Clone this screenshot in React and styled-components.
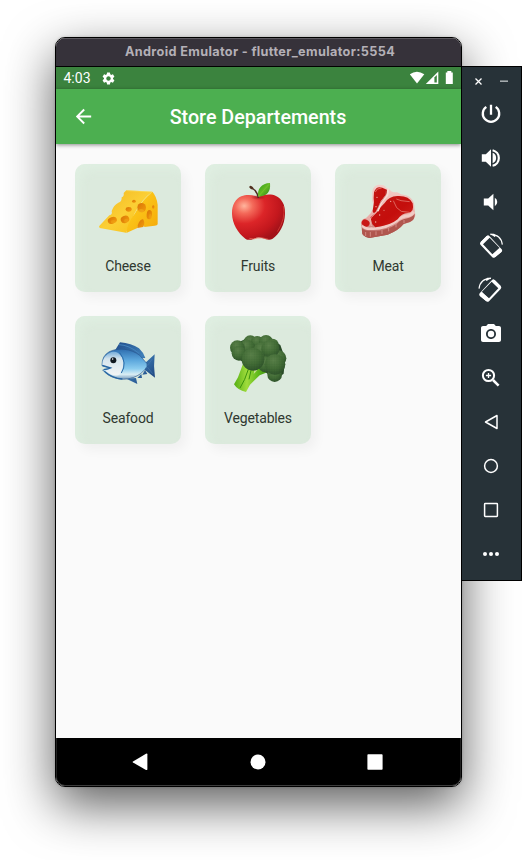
import React from "react";
import styled, { createGlobalStyle } from "styled-components";
import { MdArrowBack, MdSettings, MdPhotoCamera } from "react-icons/md";

const GlobalStyle = createGlobalStyle`
  * { box-sizing: border-box; }
  html, body { margin: 0; background: #fff; overflow: hidden; }
  svg { display: block; flex: none; }
`;

const Desktop = styled.main`
  width: 522px;
  height: 860px;
  padding: 37px 0 0 55px;
  display: flex;
  align-items: flex-start;
  background: #fff;
  overflow: hidden;
  font-family: Roboto, "Liberation Sans", sans-serif;
`;

const Device = styled.section`
  width: 407px;
  height: 750px;
  flex: none;
  display: flex;
  flex-direction: column;
  border: 1px solid #000;
  border-radius: 10px;
  overflow: hidden;
  background: #fafafa;
  box-shadow: 0 18px 50px rgba(0, 0, 0, 0.64), 0 0 3px rgba(0, 0, 0, 0.2);
`;

const TitleBar = styled.header`
  height: 29px;
  flex: none;
  display: flex;
  align-items: center;
  justify-content: center;
  padding: 0 0 1px 3px;
  background: #36323a;
  border-bottom: 1px solid #000;
  box-shadow: inset 0 1px 0 #5d5a60;
  color: #b4b0b7;
  font: 700 12.7px Inter, sans-serif;
  letter-spacing: 0.35px;
  white-space: nowrap;
`;

const StatusBar = styled.div`
  height: 22px;
  flex: none;
  display: flex;
  align-items: center;
  padding: 0 6px 0 7.5px;
  background: #3b833e;
  color: #fff;
`;

const Clock = styled.span`
  width: 37px;
  font-size: 14px;
  line-height: 22px;
`;

const StatusIcons = styled.div`
  margin-left: auto;
  display: flex;
`;

const AppBar = styled.div`
  height: 55px;
  flex: none;
  display: grid;
  grid-template-columns: 54px 1fr 54px;
  align-items: center;
  background: #4caf50;
  color: #fff;
  box-shadow: 0 1px 4px rgba(0, 0, 0, 0.45);
  z-index: 1;
`;

const BackButton = styled.div`
  display: flex;
  justify-content: center;
`;

const AppTitle = styled.h1`
  margin: 2px 0 0;
  padding-right: 1px;
  font-size: 19.7px;
  font-weight: 500;
  text-align: center;
  white-space: nowrap;
`;

const Departments = styled.div`
  flex: 1;
  display: grid;
  grid-template-columns: repeat(3, 106px);
  grid-auto-rows: 128px;
  gap: 24px;
  padding: 20px 19px;
  background: #fafafa;
`;

const Card = styled.article`
  display: flex;
  flex-direction: column;
  align-items: center;
  padding-top: 16px;
  border-radius: 10px;
  background: #dceadd;
  box-shadow: 5px 6px 12px rgba(0, 0, 0, 0.045), inset 5px 6px 10px rgba(225, 241, 228, 0.6);
`;

const CardLabel = styled.span`
  margin-top: 14px;
  font-size: 14px;
  line-height: 16px;
  letter-spacing: -0.16px;
  color: #2f3830;
`;

const NavBar = styled.nav`
  height: 48px;
  flex: none;
  display: flex;
  align-items: center;
  justify-content: space-between;
  padding: 0 78px 1px 76px;
  background: #000;
  border-radius: 0 0 9px 9px;
  box-shadow: inset 0 -1px 0 #3c3c3c, inset 1px 0 0 #222, inset -1px 0 0 #222;
`;

const Sidebar = styled.aside`
  width: 61px;
  height: 515px;
  flex: none;
  margin: 29px 0 0 -1px;
  display: flex;
  flex-direction: column;
  background: #273238;
  border: 1px solid #000;
  color: #fff;
  z-index: 1;
`;

const WindowControls = styled.div`
  height: 25px;
  padding: 3px 0 0 12px;
  display: flex;
  align-items: center;
  gap: 16px;
`;

const Tool = styled.div`
  height: 44px;
  display: flex;
  align-items: center;
  justify-content: center;
  padding-right: 1px;
`;

const Cheese = () => (
  <svg width="64" height="64" viewBox="93 75 192 192">
    <defs>
      <linearGradient id="cheeseTop" x1="0" y1="0" x2="1" y2="1">
        <stop offset="0" stopColor="#f2b51f" />
        <stop offset=".5" stopColor="#fbcf35" />
        <stop offset="1" stopColor="#f8be12" />
      </linearGradient>
      <linearGradient id="cheeseSide" x1="0" y1="0" x2="1" y2="1">
        <stop offset="0" stopColor="#ffd522" />
        <stop offset="1" stopColor="#f5a90a" />
      </linearGradient>
      <linearGradient id="cheeseHole" x1="0" y1="0" x2="1" y2="1">
        <stop offset="0" stopColor="#d97408" />
        <stop offset="1" stopColor="#f39d0b" />
      </linearGradient>
    </defs>
    <path fill="url(#cheeseTop)" d="M102 214 133 181Q143 179 140 168Q146 150 160 143Q171 142 170 127Q178 124 176 114L184 106 262 110Q230 132 208 177L183 233 104 219Z" />
    <path fill="url(#cheeseSide)" d="M262 110Q275 124 278 149V208Q277 212 269 212L238 216Q236 201 227 202Q220 204 217 219L184 234Q185 208 210 175Q232 133 262 110Z" />
    <path fill="none" stroke="#ffe05e" strokeWidth="1.5" d="M184 107 261 111M207 178Q228 138 259 114" />
    <g fill="url(#cheeseHole)">
      <ellipse cx="142" cy="196" rx="14" ry="10" transform="rotate(-20 142 196)" />
      <ellipse cx="180" cy="193" rx="13" ry="11" transform="rotate(-22 180 193)" />
      <ellipse cx="191" cy="163" rx="9" ry="7" />
      <ellipse cx="207" cy="139" rx="5.5" ry="4.5" />
      <ellipse cx="230" cy="158" rx="13" ry="14" />
      <ellipse cx="253" cy="179" rx="8" ry="14" transform="rotate(5 253 179)" />
      <ellipse cx="265" cy="156" rx="3.5" ry="5" />
      <path d="M217 219Q219 196 234 192Q241 203 235 216Z" />
    </g>
    <g fill="#f8b822">
      <ellipse cx="145" cy="200" rx="8" ry="5" opacity=".3" />
      <ellipse cx="184" cy="197" rx="7" ry="6" opacity=".3" />
      <ellipse cx="228" cy="167" rx="9" ry="5" opacity=".5" />
      <ellipse cx="256" cy="184" rx="4" ry="8" opacity=".3" />
    </g>
  </svg>
);

const Apple = () => (
  <svg width="64" height="64" viewBox="93 75 192 192">
    <defs>
      <radialGradient id="appleSkin" cx=".23" cy=".25" r=".82">
        <stop offset="0" stopColor="#ffb59d" />
        <stop offset=".2" stopColor="#f46a5a" />
        <stop offset=".48" stopColor="#dc2528" />
        <stop offset=".8" stopColor="#c3171d" />
        <stop offset="1" stopColor="#a31219" />
      </radialGradient>
      <linearGradient id="appleLeaf" x1="0" y1="0" x2="1" y2="1">
        <stop offset="0" stopColor="#2e9c1b" />
        <stop offset=".5" stopColor="#65ba23" />
        <stop offset="1" stopColor="#278417" />
      </linearGradient>
      <radialGradient id="appleDip">
        <stop offset="0" stopColor="#8e1118" stopOpacity=".7" />
        <stop offset="1" stopColor="#8e1118" stopOpacity="0" />
      </radialGradient>
    </defs>
    <path fill="url(#appleSkin)" d="M190 126C211 117 229 117 243 123C263 133 271 152 270 177C269 211 253 237 233 251Q223 258 204 250Q190 245 177 251Q160 258 151 251C128 234 112 205 111 177C110 151 121 132 139 124C154 118 173 119 190 126Z" />
    <path d="M163 250Q177 254 188 249Q199 246 220 253" fill="none" stroke="#ed7160" strokeWidth="3" opacity=".7" />
    <path d="M265 153Q273 190 247 230" fill="none" stroke="#ef5546" strokeWidth="3" opacity=".5" />
    <ellipse cx="190" cy="127" rx="23" ry="8" fill="url(#appleDip)" />
    <path d="M190 129Q187 109 171 99" fill="none" stroke="#4b2b20" strokeWidth="4" />
    <ellipse cx="169" cy="98" rx="7" ry="4" transform="rotate(38 169 98)" fill="#51301f" />
    <path fill="url(#appleLeaf)" d="M190 125C185 104 199 84 225 84Q229 123 190 125Z" />
    <path d="M192 123Q205 106 222 88" fill="none" stroke="#82c437" strokeWidth="1.5" />
  </svg>
);

const Meat = () => (
  <svg width="64" height="64" viewBox="93 75 192 192">
    <defs>
      <linearGradient id="meatEdge" x1="0" y1="0" x2="0" y2="1">
        <stop offset="0" stopColor="#f5cfca" />
        <stop offset=".65" stopColor="#e8aaa4" />
        <stop offset="1" stopColor="#a9514b" />
      </linearGradient>
      <linearGradient id="meatRed" x1="0" y1="0" x2="1" y2="1">
        <stop offset="0" stopColor="#c41814" />
        <stop offset=".55" stopColor="#c40e0c" />
        <stop offset="1" stopColor="#d12a22" />
      </linearGradient>
    </defs>
    <path fill="url(#meatEdge)" d="M142 111C143 99 150 90 161 89Q181 89 184 99L195 104Q199 113 217 112Q226 119 243 121C259 126 270 141 268 158L271 180Q269 195 255 201L236 207Q220 227 188 239L133 249Q110 243 111 230L108 203Q108 193 124 188L137 175Q150 155 142 137Z" />
    <path fill="#b0564e" d="M111 220Q121 230 142 229Q188 227 216 206Q228 193 247 190Q263 185 269 176Q271 193 255 201L236 207Q220 227 188 239L133 249Q110 243 111 230Z" />
    <path fill="none" stroke="#e3a59d" strokeWidth="2" d="M122 231v12m14-12v14m17-16v12m18-16v12m20-18v10m22-22v10m24-22v9" />
    <path fill="none" stroke="#f0cbc5" strokeWidth="8" d="M112 211Q121 223 139 221Q181 223 216 197Q229 184 251 182Q261 180 266 170" />
    <path fill="url(#meatRed)" d="M147 112Q153 92 172 98L187 105Q190 113 176 128L152 170Q144 178 143 168L147 142Q145 130 147 112Z" />
    <path fill="url(#meatRed)" d="M179 144Q191 124 217 123Q252 121 263 145Q269 172 249 174Q229 175 218 193Q196 212 151 217L142 208 136 187 152 174Q166 157 179 144Z" />
    <ellipse cx="122" cy="204" rx="12" ry="10" transform="rotate(25 122 204)" fill="#c91716" />
    <path fill="none" stroke="#f8dbd4" strokeWidth="6" strokeLinejoin="round" d="m190 101-3 19-17 20-12 28" />
    <path fill="none" stroke="#eeb4ab" strokeWidth="3" d="m158 168-20 20-3 10 4 15" />
    <path fill="none" stroke="#bd655d" strokeWidth="2" d="m184 106-2 15-17 24-10 21" />
    <path fill="none" stroke="#e88c82" strokeWidth="2" d="m205 137 10 21 14 11 24 3M214 132l14 5 26 3M151 111l6-9 13-3" />
    <g fill="#f1b6a8">
      <circle cx="156" cy="127" r="2" />
      <circle cx="164" cy="180" r="2" />
      <circle cx="152" cy="201" r="2" />
      <circle cx="197" cy="139" r="2" />
      <circle cx="177" cy="166" r="1.5" />
      <circle cx="153" cy="155" r="2" />
    </g>
  </svg>
);

const Fish = () => (
  <svg width="64" height="64" viewBox="93 81 192 192">
    <defs>
      <linearGradient id="fishBody" x1="0" y1="0" x2="0" y2="1">
        <stop offset="0" stopColor="#2f6eaf" />
        <stop offset=".36" stopColor="#5ba6dc" />
        <stop offset=".65" stopColor="#8bccef" />
        <stop offset=".84" stopColor="#d9edf4" />
        <stop offset="1" stopColor="#779bbd" />
      </linearGradient>
      <linearGradient id="fishFin" x1="0" y1="0" x2="1" y2="1">
        <stop offset="0" stopColor="#204b8a" />
        <stop offset=".5" stopColor="#3e7fb8" />
        <stop offset="1" stopColor="#193b75" />
      </linearGradient>
      <linearGradient id="fishFace" x1="0" y1="0" x2="0" y2="1">
        <stop offset="0" stopColor="#75acd9" />
        <stop offset=".3" stopColor="#d4e4ed" />
        <stop offset="1" stopColor="#f3f5f5" />
      </linearGradient>
    </defs>
    <path fill="url(#fishFin)" d="M151 134 165 112Q199 115 222 130Q235 142 241 159L209 161ZM238 176 269 148Q265 181 270 218L239 194ZM184 221 217 237 213 219ZM217 219l14 0-2-12ZM232 209l15-2-7-12Z" />
    <path fill="url(#fishBody)" stroke="#27568f" strokeWidth="2" d="M111 180Q111 152 133 140C160 127 199 131 224 151L246 176Q249 184 240 193C222 215 195 225 164 222Q134 217 119 201L113 195 136 189 112 183Z" />
    <path fill="url(#fishFace)" d="M112 180Q112 152 139 141Q158 136 170 156Q183 178 165 207Q156 216 139 208L119 198 136 190Z" />
    <path fill="none" stroke="#2c6ba8" strokeWidth="3" d="M164 143Q188 174 169 204" />
    <path fill="none" stroke="#2766a3" strokeWidth="4" d="M112 181 137 189Q127 194 117 193M118 199Q143 221 172 222" />
    <path fill="none" stroke="#4383bd" strokeWidth="3" d="M162 119Q192 120 222 145" />
    <path fill="none" stroke="#4776ab" strokeWidth="2" d="M248 181 262 162M248 187 263 206" />
    <circle cx="145" cy="166" r="9" fill="#101820" />
    <circle cx="143" cy="162" r="2.3" fill="#fff" />
  </svg>
);

const FLORETS = [
  [166, 112, 21],
  [187, 112, 19],
  [213, 111, 21],
  [233, 119, 18],
  [250, 160, 24],
  [156, 128, 24],
  [127, 128, 22],
  [132, 145, 22],
  [200, 138, 26],
  [226, 132, 27],
  [212, 178, 24],
  [239, 209, 22],
  [240, 178, 31],
  [174, 163, 34],
];

const Broccoli = () => (
  <svg width="64" height="64" viewBox="93 81 192 192">
    <defs>
      <radialGradient id="floret" cx=".42" cy=".3" r=".75">
        <stop offset="0" stopColor="#587f48" />
        <stop offset=".55" stopColor="#406a34" />
        <stop offset="1" stopColor="#2b4e28" />
      </radialGradient>
      <linearGradient id="stalk" x1="0" y1="0" x2="1" y2="0">
        <stop offset="0" stopColor="#55af13" />
        <stop offset=".35" stopColor="#a0dc3c" />
        <stop offset=".65" stopColor="#5eb91b" />
        <stop offset="1" stopColor="#337f0b" />
      </linearGradient>
      <pattern id="buds" width="5" height="5" patternUnits="userSpaceOnUse">
        <circle cx="1" cy="1" r=".9" fill="#7b9b5e" />
        <circle cx="4" cy="3.5" r=".9" fill="#1b401c" />
      </pattern>
    </defs>
    <path fill="url(#stalk)" d="M145 174 129 217 117 238Q128 256 153 261L165 239 194 211 228 197 179 164Z" />
    <path fill="none" stroke="#3a920d" strokeWidth="3" d="m161 190-12 33-14 26m34-57-7 31" />
    <path fill="#c8df91" d="m178 194 9 1-11 12Z" />
    <path fill="#294a27" d="M112 120 160 98 222 96 256 120 270 160 266 206 240 226 205 196 145 172 112 150Z" />
    {FLORETS.map(([cx, cy, r]) => (
      <g key={`${cx}-${cy}`}>
        <circle cx={cx} cy={cy} r={r} fill="url(#floret)" />
        <circle cx={cx} cy={cy} r={r} fill="url(#buds)" opacity=".22" />
      </g>
    ))}
  </svg>
);

const RotateIcon = ({ mirrored }) => (
  <svg width="26" height="26" viewBox="78 521 78 78">
    <g transform={mirrored ? "translate(232 0) scale(-1 1)" : undefined}>
      <path
        fillRule="evenodd"
        fill="#fff"
        d="M86 548 104 530Q108 526 112 530L149 570Q152 574 149 577L129 594Q125 597 121 594L86 557Q82 552 86 548ZM93 555 121 585 143 566 113 535Z"
      />
      <path d="M86 548 104 530 110 533 90 556ZM149 577 129 594 121 587 142 566Z" fill="#fff" />
      <path d="M115 525Q147 525 151 556" fill="none" stroke="#fff" strokeWidth="3.6" />
      <path d="m114 523 14 10 4-4-6-6Z" fill="#fff" />
    </g>
  </svg>
);

const DEPARTMENTS = [
  ["Cheese", Cheese],
  ["Fruits", Apple],
  ["Meat", Meat],
  ["Seafood", Fish],
  ["Vegetables", Broccoli],
];

const OutlineIcon = ({ weight = 1.5, children }) => (
  <svg width="24" height="24" viewBox="0 0 24 24" fill="none" stroke="#fff" strokeWidth={weight} strokeLinejoin="round">
    {children}
  </svg>
);

const TOOLS = [
  ["power", <OutlineIcon weight={2.3}><path d="M12 2.8v10M7.3 4.9a8.2 8.2 0 1 0 9.4 0" /></OutlineIcon>],
  [
    "volume-up",
    <OutlineIcon weight={2.2}>
      <path d="M2.8 8.2h4l5.2-5v17.6l-5.2-5h-4Z" fill="#fff" stroke="none" />
      <path d="M13.6 6.8a5.6 5.6 0 0 1 0 10.4Z" fill="#fff" stroke="none" />
      <path d="M13.6 4.2a8 8 0 0 1 0 15.6" />
    </OutlineIcon>,
  ],
  [
    "volume-down",
    <OutlineIcon>
      <path d="M4.8 8.6h4.4l5.2-4.8v16.4l-5.2-4.8H4.8Z" fill="#fff" stroke="none" />
      <path d="M15.8 7.8a4.8 4.8 0 0 1 0 8.4Z" fill="#fff" stroke="none" />
    </OutlineIcon>,
  ],
  ["rotate-left", <RotateIcon />],
  ["rotate-right", <RotateIcon mirrored />],
  ["camera", <MdPhotoCamera size={24} />],
  [
    "zoom",
    <OutlineIcon weight={2}>
      <circle cx="9.5" cy="9.5" r="5.6" />
      <path d="m14 14 5.6 5.6" strokeWidth="2.5" />
      <path d="M9.5 6.9v5.2M6.9 9.5h5.2" strokeWidth="1.3" />
    </OutlineIcon>,
  ],
  ["back", <OutlineIcon><path d="M18 5.5v13L6.5 12Z" /></OutlineIcon>],
  ["home", <OutlineIcon><circle cx="12" cy="12" r="6.4" /></OutlineIcon>],
  ["overview", <OutlineIcon><rect x="5.6" y="5.6" width="12.8" height="12.8" rx=".6" /></OutlineIcon>],
  [
    "more",
    <svg width="24" height="24" viewBox="0 0 24 24" fill="#fff">
      <circle cx="6" cy="12" r="2" />
      <circle cx="12" cy="12" r="2" />
      <circle cx="18" cy="12" r="2" />
    </svg>,
  ],
];

export default function App() {
  return (
    <>
      <GlobalStyle />
      <Desktop>
        <Device>
          <TitleBar>Android Emulator - flutter_emulator:5554</TitleBar>
          <StatusBar>
            <Clock>4:03</Clock>
            <MdSettings size={15} />
            <StatusIcons>
              <svg width="46" height="16" viewBox="0 0 46 16" fill="#fff">
                <path d="M.8 4.2Q7.8-.8 15.3 4.2L8 13.5Z" />
                <path d="M16.8 14 29.3 1.5V14Z" />
                <path d="M25.4 7.5 27.8 5v7.6h-2.4Z" fill="#3b833e" />
                <path d="M36.8 2.4h1.5V1h4v1.4h1.5V14h-7Z" />
              </svg>
            </StatusIcons>
          </StatusBar>
          <AppBar>
            <BackButton><MdArrowBack size={23} /></BackButton>
            <AppTitle>Store Departements</AppTitle>
          </AppBar>
          <Departments>
            {DEPARTMENTS.map(([name, Picture]) => (
              <Card key={name}>
                <Picture />
                <CardLabel>{name}</CardLabel>
              </Card>
            ))}
          </Departments>
          <NavBar>
            <svg width="16" height="18" viewBox="0 0 16 18" fill="#fff"><path d="M14 .8Q15.4.2 15.4 1.5v14.8q0 1.2-1.4.6L1 9.6Q.1 9 1 8.4Z" /></svg>
            <svg width="16" height="16" viewBox="0 0 16 16" fill="#fff"><circle cx="8" cy="8" r="7.5" /></svg>
            <svg width="16" height="16" viewBox="0 0 16 16" fill="#fff"><rect x=".4" y=".3" width="15.2" height="15.4" rx=".8" /></svg>
          </NavBar>
        </Device>
        <Sidebar>
          <WindowControls>
            <svg width="9" height="9" viewBox="0 0 9 9" stroke="#fff" strokeWidth="1.3"><path d="m1.5 1.5 6 6M7.5 1.5 1.5 7.5" /></svg>
            <svg width="9" height="9" viewBox="0 0 9 9"><path d="M1 3.4h8V5H1Z" fill="#a5abae" /></svg>
          </WindowControls>
          {TOOLS.map(([name, icon]) => (
            <Tool key={name}>{icon}</Tool>
          ))}
        </Sidebar>
      </Desktop>
    </>
  );
}
